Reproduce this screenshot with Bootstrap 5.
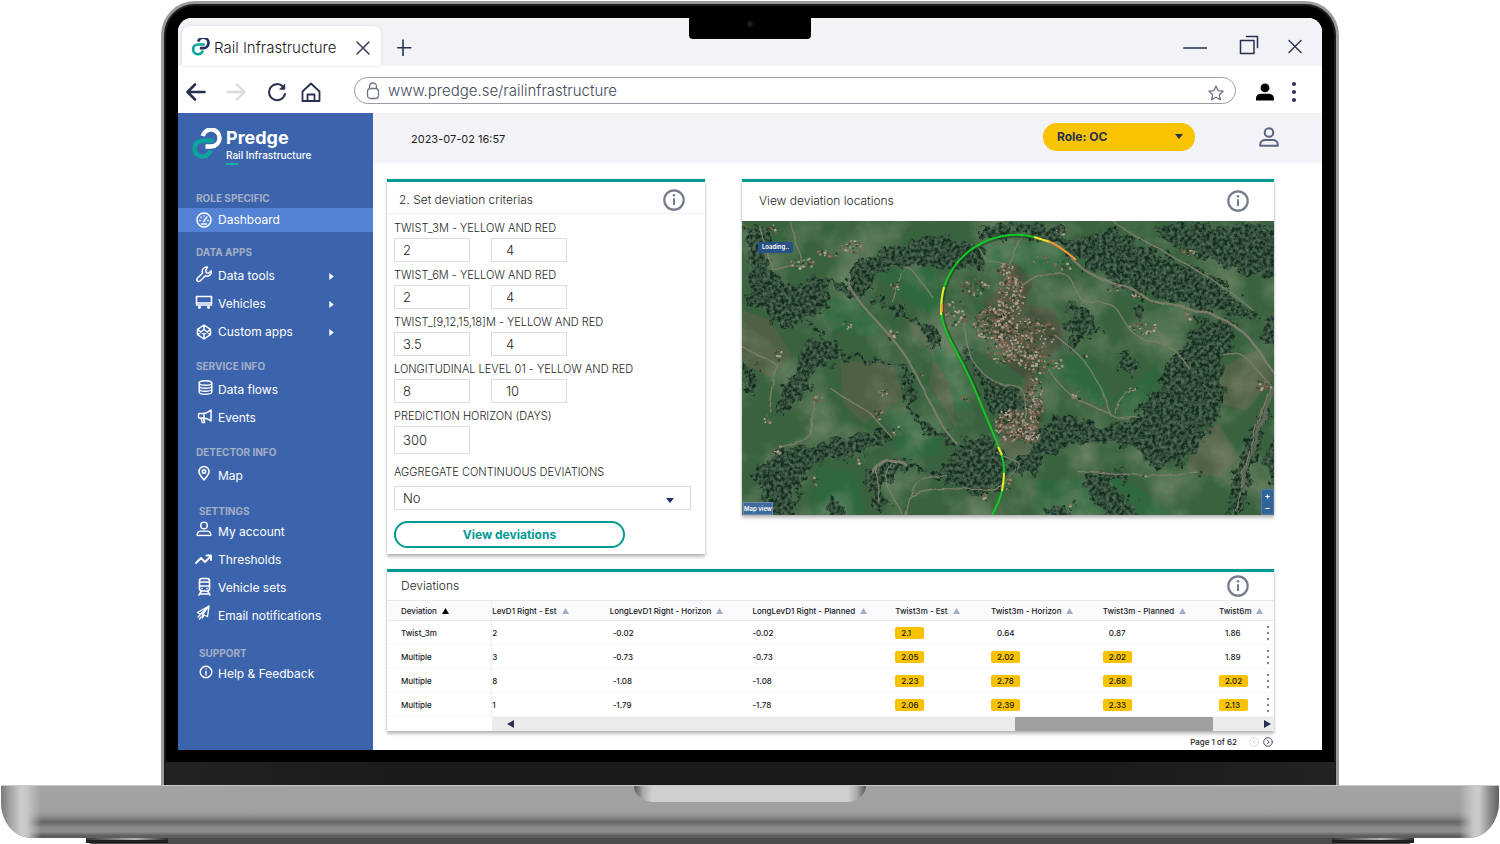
<!DOCTYPE html>
<html lang="en">
<head>
<meta charset="utf-8">
<meta name="viewport" content="width=device-width, initial-scale=1">
<title>Predge Rail Infrastructure</title>
<link href="https://cdn.jsdelivr.net/npm/bootstrap@5.3.0/dist/css/bootstrap.min.css" rel="stylesheet">
<style>
:root{--navy:#27304f;--teal:#009a93;--blue:#3c64ad;--amber:#fac300;--pale:#f2f2f7;--slate:#6f788c}
body{font-family:Inter,"Open Sans",sans-serif;font-size:12px;line-height:20px;color:#1d1f24;background:#fff;overflow-x:hidden}
svg{display:block;flex:none}
.ln{fill:none;stroke:currentColor;stroke-linecap:round;stroke-linejoin:round}
button.plain{border:0;background:none;padding:0;color:inherit}
/* laptop */
.stage{padding:1px 161px 0}
.lid{background:#000;border:3px solid #9a9c9c;border-bottom:0;border-radius:34px 34px 0 0;padding:14px 14px 0;box-shadow:inset 0 0 0 2px #1b1c1c}
.screen{background:#fff;border-radius:14px 14px 0 0;overflow:hidden;position:relative}
.notch{position:absolute;top:0;left:50%;margin-left:-61px;width:122px;height:21px;background:#000;border-radius:0 0 4px 4px}
.notch::after{content:"";position:absolute;left:58px;top:3px;width:6px;height:6px;border-radius:50%;background:#15222f;border:1px solid #1b1b1b}
.chin{height:23px;margin:12px -12px 0;background:linear-gradient(90deg,#212423,#1b1b1b 20%,#1b1b1b 80%,#212423)}
.deck{height:53px;margin:0 1px;border-radius:0 0 30px 30px / 0 0 36px 36px;border-top:1px solid #c9c9cb;position:relative;overflow:hidden;
background:linear-gradient(90deg,#77787a 0,#a2a3a5 9px,#cacccd 20px,#c4c6c7 26px,rgba(150,151,153,0) 40px,rgba(150,151,153,0) calc(100% - 40px),#c4c6c7 calc(100% - 26px),#cacccd calc(100% - 20px),#8a8b8d calc(100% - 9px),#5f6062 100%),linear-gradient(180deg,#a3a3a6 0,#9f9fa2 26px,#8b8b8e 31px,#68686a 36px,#707073 38px,#8d8d90 42px,#8b8b8d 46px,#5a5a5b 50px,#666 53px)}
.deck::before{content:"";position:absolute;left:50%;top:0;margin-left:-116px;width:232px;height:16px;border-radius:0 0 20px 20px / 0 0 16px 16px;background:linear-gradient(90deg,#55565a 0,#a9aaac 9px,#cfcfd1 18px,#cfcfd1 calc(100% - 18px),#a9aaac calc(100% - 9px),#55565a 100%)}
.feet{height:6px;margin:0 86px;background:#4b4b4b;border-radius:0 0 8px 8px}
.feet i{display:block;width:82px;height:5px;background:linear-gradient(90deg,#333,#b5b6b8 60%,#2b2b2b);border-bottom:3px solid #222}
/* browser */
.tabs{height:48px;background:var(--pale);padding:8px 19px 0 4px;color:var(--navy)}
.tab{width:199px;height:40px;background:#fff;border-radius:7px 7px 0 0;box-shadow:0 0 3px #d5d5dc;padding:3px 11px 0 9px;font-size:15px;font-weight:300;color:#15171c}
.tools{height:47px;padding:4px 22px 2px 8px;color:var(--navy)}
.tools>button,.tools>svg{margin-top:3px}
.tools .rl{margin-left:21px}
.tools .hm{margin-left:14px}
.url{height:27px;margin-left:33px;border:1px solid #9a9ca4;border-radius:14px;padding:0 11px 0 11px;color:#6d7484}
.url input{border:0;outline:0;background:none;width:100%;font-size:15px;font-weight:300;color:#454b5a;padding:0}
/* sidebar */
.side{width:195px;background:var(--blue);color:#fff;flex:none}
.brand{padding:15px 0 0 13px;height:75px}
.brand b{font-size:18px;line-height:20px;display:block}
.brand span{font-size:10px;line-height:14px;font-weight:500;display:block}
.brand u{display:block;width:12px;height:2px;background:#11b0a5;margin-top:1px}
.grp{margin:0 0 10px}
.grp h2{font-size:10px;line-height:20px;font-weight:700;color:#a3afc4;margin:0 0 0 18px}
.grp.snug{margin-bottom:16px}
.grp.wide{margin-bottom:14px}
.snug h2{line-height:14px;margin-left:21px}
.grp a{display:flex;align-items:center;height:28px;padding-left:17px;gap:5px;color:#fff;text-decoration:none;font-size:12px}
.grp a.on{height:24px;background:#5482d5}
.grp a .arr{margin-left:auto;margin-right:39px}
/* page */
.top{height:50px;background:var(--pale);padding:0 43px 2px 38px}
.top time{font-size:11px;padding-top:3px}
.role{appearance:none;width:152px;height:28px;border:0;border-radius:14px;font-size:12px;font-weight:700;color:#27304f;padding:0 14px;margin-right:64px;background:var(--amber) url("data:image/svg+xml,%3Csvg xmlns='http://www.w3.org/2000/svg' width='8' height='6'%3E%3Cpath d='M0 0h8L4 5z' fill='%2327304f'/%3E%3C/svg%3E") no-repeat right 12px center}
.body-pad{padding:16px 48px 0 14px}
.panel{border-top:3px solid var(--teal);background:#fff;box-shadow:0 3px 3px rgba(0,0,0,.25),0 0 2px rgba(0,0,0,.15)}
.panel h1{font-size:12px;font-weight:300;margin:0;line-height:20px}
.crit{width:318px;flex:none}
.crit .hd{height:32px;padding:4px 20px 0 12px;border-bottom:1px solid #f0f0f3}
.crit form{padding:4px 14px 6px 7px}
.crit label,.crit legend{display:block;font-size:11px;line-height:20px;font-weight:300;margin:0;float:none}
.crit fieldset{margin-bottom:3px}
.pair{display:flex;gap:21px}
.box{border:1px solid #dcdce0;height:24px;width:76px;padding:0 8px;font-size:13px;font-weight:300;color:#1d1f24;background-color:#fff;display:block;border-radius:0}
.box.r{padding-left:14px}
.box.tall{height:28px}
select.box{appearance:none;width:100%;background:url("data:image/svg+xml,%3Csvg xmlns='http://www.w3.org/2000/svg' width='8' height='5'%3E%3Cpath d='M0 0h8L4 5z' fill='%2327306a'/%3E%3C/svg%3E") no-repeat right 16px top 11px}
.go{width:231px;height:27px;border:2px solid var(--teal);border-radius:14px;background:#fff;color:var(--teal);font-weight:700;font-size:12px;line-height:20px;padding:0;display:block;margin-top:11px}
.mapc{margin-left:37px}
.mapc .hd{height:39px;padding:0 25px 2px 17px}
.mapbox{position:relative;height:294px;background:#3c6341;overflow:hidden}
.mapbox svg.sat{width:100%;height:100%}
.tag{position:absolute;background:#285084;color:#fff;font-size:6px;line-height:12px;font-weight:600;text-align:center;padding:0;border:0;white-space:nowrap}
.tag.load{left:16px;top:21px;width:35px;height:11px;border-radius:2px;line-height:10px}
.tag.view{left:1px;bottom:0;width:30px;height:13px;background:#3d6b9d;box-shadow:inset 0 0 0 1px #6b8bac}
.zoomer{position:absolute;right:0;bottom:0;width:13px;background:#2f6496;border:1px solid #56799f}
.zoomer button{display:block;width:100%;height:12px;border:0;background:none;color:#fff;font-size:8px;line-height:12px;padding:0;font-weight:700}
.dev{margin-top:15px}
.dev .hd{height:28px;padding:0 25px 0 14px}
.dev table{table-layout:fixed;width:100%;font-size:8px;line-height:12px;border-collapse:collapse;color:#15171c}
.dev th{height:20px;padding:0;font-weight:500;white-space:nowrap;background:#fafafc;border-top:1px solid #e6e8f0;border-bottom:1px solid #e6e8f0}
.dev td{height:24px;padding:0;border-bottom:1px solid #f6f6f8;font-weight:500}
.dev th:first-child,.dev td:first-child{padding-left:14px}
.dev td:last-child{padding-left:2px}
.dev th svg{display:inline-block;margin-left:5px;vertical-align:0}
.dev th:nth-child(2),.dev td:nth-child(2){border-left:1px solid #f0f0f4}
.v{display:block;width:29px;height:12px;padding-left:6px;border-radius:2px}
.v.hot{background:var(--amber)}
td.n{padding-left:3px}
.bar{height:14px;margin-left:105px;background:#ebebeb;padding:0 3px 0 15px}
.thumb{width:198px;height:14px;background:#9f9f9f;margin:0 51px 0 auto;border-radius:1px}
.pager{height:19px;font-size:8px;font-weight:500;padding:3px 1px 0 0}
</style>
</head>
<body>
<svg width="0" height="0" class="position-absolute" aria-hidden="true">
<symbol id="info" viewBox="0 0 22 22"><circle cx="11" cy="11" r="9.7" fill="none" stroke="#737b8c" stroke-width="2.2"/><path d="M11 9.2v6.8" stroke="#737b8c" stroke-width="2"/><circle cx="11" cy="6.2" r="1.3" fill="#737b8c"/></symbol>
<symbol id="links" viewBox="0 0 31 31"><path d="M11.800 8A8.500 8.500 0 1 1 20.500 18.500H14.500" fill="none" stroke="var(--ring)" stroke-width="4.400"/><path d="M22.500 12.600H11.500a8 8 0 1 0 7.800 9.800" fill="none" stroke="#0aa69b" stroke-width="4.400"/></symbol>
<symbol id="up" viewBox="0 0 7 6"><path d="M3.500 0 7 6H0z" fill="currentColor"/></symbol>
<symbol id="arrow" viewBox="0 0 5 8"><path d="M0 0l5 4-5 4z" fill="currentColor"/></symbol>
<symbol id="dots" viewBox="0 0 4 16"><g fill="#7f8590"><circle cx="2" cy="2" r="1.200"/><circle cx="2" cy="8" r="1.200"/><circle cx="2" cy="14" r="1.200"/></g></symbol>
<symbol id="person" viewBox="0 0 20 20"><circle cx="10" cy="5.500" r="4.300"/><path d="M1.200 18.800v-1.300c0-2.800 2.400-4.500 5-4.500h7.600c2.600 0 5 1.700 5 4.500v1.300z"/></symbol>
</svg>

<div class="stage">
<div class="lid">
<div class="screen">
  <header>
    <div class="tabs d-flex align-items-start">
      <div class="tab d-flex align-items-center">
        <svg width="19" height="19" viewBox="0 2 31 31" style="--ring:#243263"><use href="#links" width="31" height="31"/></svg>
        <span class="ms-1 me-auto">Rail Infrastructure</span>
        <button class="plain" aria-label="Close tab"><svg width="14" height="14" viewBox="0 0 14 14" class="ln" stroke-width="1.400" style="color:#27304f"><path d="M1 1l12 12M13 1 1 13"/></svg></button>
      </div>
      <button class="plain ms-3 mt-2 pt-1 me-auto" aria-label="New tab"><svg width="17" height="18" viewBox="4 0 17 18" class="ln" stroke-width="1.600"><path d="M10 2v15.500M4.800 9.700h13"/></svg></button>
      <div class="d-flex align-items-center mt-2">
        <button class="plain me-4 pe-2" aria-label="Minimize"><svg width="24" height="22" viewBox="0 0 24 22" class="ln" stroke-width="1.500"><path d="M.7 14h23"/></svg></button>
        <button class="plain me-4 pe-1" aria-label="Restore"><svg width="20" height="22" viewBox="0 0 20 22" class="ln" stroke-width="1.500"><path d="M1.500 6.500h13.500v13h-13.500zM7.500 2.500h11v11"/></svg></button>
        <button class="plain" aria-label="Close"><svg width="16" height="22" viewBox="0 0 16 22" class="ln" stroke-width="1.400"><path d="M2 6.500l12 12M14 6.500l-12 12"/></svg></button>
      </div>
    </div>
    <div class="tools d-flex align-items-center">
      <button class="plain" aria-label="Back"><svg width="20" height="18" viewBox="0 0 20 18" class="ln" stroke-width="2.600"><path d="M18.500 9H2M9 1.500 1.500 9 9 16.500"/></svg></button>
      <button class="plain ms-3 ps-1" aria-label="Forward"><svg width="20" height="18" viewBox="0 0 20 18" class="ln" stroke-width="2.400" style="color:#dcdcde"><path d="M1.500 9h17M11 1.500 18.500 9 11 16.500"/></svg></button>
      <button class="plain rl" aria-label="Reload"><svg width="20" height="20" viewBox="0 0 20 20" class="ln" stroke-width="2"><path d="M16 4.700A8 8 0 1 0 17.900 12"/><path d="M17.800 2.500v4.800H13z" fill="currentColor" stroke-width=".8"/></svg></button>
      <button class="plain hm" aria-label="Home"><svg width="20" height="20" viewBox="0 0 20 20" class="ln" stroke-width="1.800"><path d="M1.500 9.500 10 1.500l8.500 8V19h-17zM6.500 19v-6.500h7V19"/></svg></button>
      <div class="url d-flex align-items-center flex-grow-1 me-3">
        <svg width="14" height="18" viewBox="0 0 14 18" class="ln" stroke-width="1.300"><rect x="1.500" y="6.500" width="11" height="10" rx="3"/><path d="M3.500 6.500V4.500a3.500 3.500 0 0 1 7 0v2"/></svg>
        <input class="ms-2" type="text" aria-label="Address" value="www.predge.se/railinfrastructure">
        <button class="plain pt-1" aria-label="Bookmark"><svg width="16" height="16" viewBox="0 0 16 16" class="ln" stroke-width="1.300"><path d="M8 1l2.100 4.700 5 .5-3.800 3.500 1.100 5L8 12.200l-4.400 2.500 1.100-5L1 6.200l4.900-.5z"/></svg></button>
      </div>
      <svg width="18" height="20" viewBox="0 0 20 20" class="ms-1" fill="#000"><circle cx="10" cy="5.500" r="4.900"/><path d="M0 19.500V17c0-3.500 3-5 5.500-5h9c2.500 0 5.500 1.500 5.500 5v2.500z"/></svg>
      <button class="plain ms-3" aria-label="Menu"><svg width="10" height="20" viewBox="0 0 10 20" fill="#27304f"><circle cx="4" cy="2" r="2"/><circle cx="4" cy="10" r="2"/><circle cx="4" cy="18" r="2"/></svg></button>
    </div>
  </header>
  <div class="notch"></div>

  <div class="d-flex">
    <nav class="side">
      <div class="brand d-flex"><svg width="31" height="31" class="me-1" style="--ring:#fff"><use href="#links"/></svg><div><b>Predge</b><span>Rail Infrastructure</span><u></u></div></div>
      <div class="grp"><h2>ROLE SPECIFIC</h2>
        <a href="#" class="on"><svg width="18" height="18" viewBox="0 0 18 18" class="ln" stroke-width="1.500"><circle cx="9" cy="9" r="7"/><path d="M8.500 10.500 12 6M4.800 9.500h.4M9 4.700V5M6 6.200l.2.200M12.800 9.500h.4M6.500 13h5"/></svg>Dashboard</a></div>
      <div class="grp"><h2>DATA APPS</h2>
        <a href="#"><svg width="18" height="22" viewBox="0 0 18 22" class="ln" stroke-width="1.500"><path d="M12.500 2.200A4.300 4.300 0 0 0 7.600 8L2.400 13.300a1.900 1.900 0 0 0 2.700 2.700l5.300-5.200a4.300 4.300 0 0 0 5.800-5l-2.600 2.500-2.300-.6-.6-2.300z"/></svg>Data tools<svg class="arr" width="5" height="7"><use href="#arrow"/></svg></a>
        <a href="#"><svg width="18" height="20" viewBox="0 0 18 20" class="ln" stroke-width="1.600"><path d="M1.500 2.500h15v8.500h-15zM1.500 9h15"/><path d="M4.500 13v.5M13.500 13v.5" stroke-width="2.800"/></svg>Vehicles<svg class="arr" width="5" height="7"><use href="#arrow"/></svg></a>
        <a href="#"><svg width="18" height="18" viewBox="0 0 18 18" class="ln" stroke-width="1.400"><path d="M9 2l6.500 4.300v5.400L9 16l-6.500-4.300V6.300zM9 2v4.500M9 11.500V16M2.500 6.300 9 11.500l6.500-5.200M2.500 11.700 9 6.500l6.500 5.200"/></svg>Custom apps<svg class="arr" width="5" height="7"><use href="#arrow"/></svg></a></div>
      <div class="grp"><h2>SERVICE INFO</h2>
        <a href="#"><svg width="18" height="22" viewBox="0 0 18 22" class="ln" stroke-width="1.400"><ellipse cx="10.500" cy="4" rx="6.300" ry="2.300"/><path d="M4.200 4v9c0 3 12.600 3 12.600 0V4M4.200 7c0 3 12.600 3 12.600 0M4.200 10c0 3 12.600 3 12.600 0"/></svg>Data flows</a>
        <a href="#"><svg width="18" height="20" viewBox="0 0 18 20" class="ln" stroke-width="1.500"><path d="M16 2v11c-3-2.500-5-3-8-3H4.500a1 1 0 0 1-1-1V6.500a1 1 0 0 1 1-1H8c3 0 5-1 8-3.500M9 5.500V10M6 10l1.300 4.500h2.200L8.500 10"/></svg>Events</a></div>
      <div class="grp wide"><h2>DETECTOR INFO</h2>
        <a href="#"><svg width="18" height="22" viewBox="0 0 18 22" class="ln" stroke-width="1.600"><path d="M9 15C6 11.500 4 9.500 4 6.500a5 5 0 0 1 10 0C14 9.500 12 11.500 9 15z"/><circle cx="9" cy="6.500" r="1.700"/></svg>Map</a></div>
      <div class="grp snug"><h2>SETTINGS</h2>
        <a href="#"><svg width="18" height="22" viewBox="0 0 20 24" class="ln" stroke-width="1.900"><use href="#person" width="20" height="17"/></svg>My account</a>
        <a href="#"><svg width="18" height="18" viewBox="0 0 18 18" class="ln" stroke-width="1.800"><path d="M1 12l5-5 4 4 6-6M11.500 4.500H16V9"/></svg>Thresholds</a>
        <a href="#"><svg width="18" height="22" viewBox="0 0 18 22" class="ln" stroke-width="1.600"><rect x="4.500" y="1.500" width="10" height="12.500" rx="2.500"/><path d="M4.500 5h10M4.500 9h10M6.500 14 4 18M12.500 14l2.500 4M5 17h9M7 11.500h.2M12 11.500h.2"/></svg>Vehicle sets</a>
        <a href="#"><svg width="18" height="24" viewBox="0 0 18 24" class="ln" stroke-width="1.300"><path d="M14 2 2.500 8.500l3 1.700L14 2l-1.500 10.500-4-1.500M14 2 7.500 10.500v3.500l1.500-3M3 13l2-2M4.500 15 6 13"/></svg>Email notifications</a></div>
      <div class="grp snug mb-0"><h2>SUPPORT</h2>
        <a href="#"><svg width="18" height="20" viewBox="0 0 18 20" class="ln" stroke-width="1.400"><circle cx="11" cy="8" r="5.800"/><path d="M11 7.500V11M11 5v.1"/></svg>Help &amp; Feedback</a></div>
    </nav>

    <main class="flex-grow-1" style="min-width:0">
      <div class="top d-flex align-items-center">
        <time class="me-auto">2023-07-02 16:57</time>
        <select class="role" aria-label="Role"><option>Role: OC</option></select>
        <button class="plain" aria-label="Account"><svg width="20" height="20" viewBox="0 0 20 20" class="ln" stroke-width="2" style="color:#5a6784"><use href="#person"/></svg></button>
      </div>
      <div class="body-pad">
        <div class="d-flex align-items-start">
          <section class="panel crit">
            <div class="hd d-flex align-items-center justify-content-between"><h1>2. Set deviation criterias</h1><svg width="22" height="22"><use href="#info"/></svg></div>
            <form onsubmit="return false">
              <fieldset><legend>TWIST_3M - YELLOW AND RED</legend><div class="pair"><input class="box" aria-label="Yellow" value="2"><input class="box r" aria-label="Red" value="4"></div></fieldset>
              <fieldset><legend>TWIST_6M - YELLOW AND RED</legend><div class="pair"><input class="box" aria-label="Yellow" value="2"><input class="box r" aria-label="Red" value="4"></div></fieldset>
              <fieldset><legend>TWIST_[9,12,15,18]M - YELLOW AND RED</legend><div class="pair"><input class="box" aria-label="Yellow" value="3.5"><input class="box r" aria-label="Red" value="4"></div></fieldset>
              <fieldset><legend>LONGITUDINAL LEVEL 01 - YELLOW AND RED</legend><div class="pair"><input class="box" aria-label="Yellow" value="8"><input class="box r" aria-label="Red" value="10"></div></fieldset>
              <label for="hz">PREDICTION HORIZON (DAYS)</label><input id="hz" class="box tall mb-2" value="300">
              <label for="ag" class="mb-1">AGGREGATE CONTINUOUS DEVIATIONS</label>
              <select id="ag" class="box"><option>No</option></select>
              <button class="go">View deviations</button>
            </form>
          </section>
          <section class="panel mapc flex-grow-1">
            <div class="hd d-flex align-items-center justify-content-between"><h1>View deviation locations</h1><svg width="22" height="22"><use href="#info"/></svg></div>
            <div class="mapbox">
              <svg class="sat" viewBox="0 0 532 294" preserveAspectRatio="xMidYMid slice" role="img" aria-label="Satellite map with railway line">
                <defs>
                  <filter id="wood" x="-5%" y="-5%" width="110%" height="110%">
                    <feTurbulence type="fractalNoise" baseFrequency=".09" numOctaves="3" seed="4" result="n"/>
                    <feDisplacementMap in="SourceGraphic" in2="n" scale="22" xChannelSelector="R" yChannelSelector="G" result="d"/>
                    <feTurbulence type="fractalNoise" baseFrequency=".28" numOctaves="3" seed="9"/>
                    <feColorMatrix values="0 0 0 0 .17  0 0 0 0 .29  0 0 0 0 .19  1.600 0 0 0 -.55" result="s"/>
                    <feComposite in="s" in2="d" operator="in" result="t"/>
                    <feMerge><feMergeNode in="d"/><feMergeNode in="t"/></feMerge>
                    <feComponentTransfer><feFuncR type="linear" slope=".68"/><feFuncG type="linear" slope=".72"/><feFuncB type="linear" slope=".68"/></feComponentTransfer>
                  </filter>
                  <filter id="grain" x="0" y="0" width="100%" height="100%"><feTurbulence type="fractalNoise" baseFrequency=".022" numOctaves="5" seed="12"/><feColorMatrix values="0 0 0 0 .36  0 0 0 0 .39  0 0 0 0 .27  2.200 0 0 0 -.9"/></filter>
                  <filter id="bend"><feTurbulence type="fractalNoise" baseFrequency=".05" numOctaves="2" seed="2"/><feDisplacementMap in="SourceGraphic" scale="7"/></filter>
                </defs>
                <rect width="532" height="294" fill="#39623f"/>
                <g transform="translate(-2 -50.500) scale(.3442 .3333)">
                  <g fill="#2f683f"><path d="M380 300l180-10 30 60-20 80-60-20-70-60zM200 400l130-30 100 110-60 20-90-20zM890 590l110-50 80 150-40 20zM1090 690l130-110-10 140-90 20zM430 720l140 40 20 90-120 20zM860 930l250-10 150 110H860zM230 890l110 20 20 120H200zM520 500l100 50 60 150-40 30zM700 230l220-20 30 70-100 30-120-20z"/></g>
                  <g fill="#4f6145"><path d="M290 570l150 10 40 100-120 80-60-60zM1310 800l80-40 60 100-60 60-90-20zM10 420l80 30 60 100-60 70-84-40zM440 400l130 120-20 120 80 140-20-140-70-110zM740 800l120 20-20 60-90-30zM1380 600l120-60 51 80-80 100-80-20z"/></g>
                  <path fill="#4c4d3c" d="M760 275l50 5 40 60-20 60 80 20 30 60-10 60-70 30-10 80 30 90-20 70-90 0-30-60 70-60 20-60-60-50-50-120-10-70 70-60z" opacity=".7"/>
                </g>
                <rect width="532" height="294" filter="url(#grain)" opacity=".45"/>
                <g filter="url(#wood)"><g transform="translate(3 -45.500) scale(.3442 .3333)" fill="#1f3a2a">
                  <path d="M290 300l60-50 80-30 90-30 120 5 60 40-20 30-90 20-80-15-80 5-50 20-20 70-30 10zM680 150h240l40 50 100-40 140 70 130 60 120 90 40 50-90-20-100-10-170-50-140-70-90-80-100-20-110 5zM1190 150h361v170l-80-20-80-30-90-40-70-30z"/>
                  <path d="M1310 430l110 0 0 70-30 70 0 80-20 90-50 60-40 60-100 20-30-60-100-20-80 0-90 50-60 50-70-20 90-60 20-90 80-10 110 30 90-20 20-60 40-40 30-70 50-50z"/>
                  <path d="M640 790l60-20 50 60 10 60-20 50-60 20-80-40-70-20 40-30 50-10zM980 900l130-20-40 50 70 60v50h-90l-50-80zM1390 1040l40-180 70-160 25-10-30 100-30 110-20 140zM180 490l70 10 50 50-80 20-30 60-50 80-55 10 25-80 30-60zM0 900l100-70 200-40 110-40 30 40-90 40-90 20-70 30-40 80-20 80H50l0-110z"/>
                  <path d="M350 900l70-50 70 0-60 40-30 30 10 80-40 0zM690 590l100 50 20 50-40 35-60-30zM940 370l50 20 15 40-20 60-35 30-15-50zM1085 530l60 20-10 60-50-30zM0 150l70 20-10 90 40 40 60 30 80-10 10 60-50 40-90 50-40-60-60-30zM520 450l40 10 0 60-30-10zM0 560l40 30-10 60H0zM870 990l60 0 10 45h-60zM250 960l40 20-10 60h-40zM620 230l70-5 0 50-70 0zM1480 480l71-80v130zM1500 860l51-90v180z"/>
                </g>
                <g transform="translate(3 -45.500) scale(.3442 .3333)" fill="none" stroke="#1f3a2a" stroke-width="15"><path d="M160 430C250 480 290 560 380 555S480 600 480 690 600 760 610 830 520 890 440 870M380 370C420 400 500 420 560 500M640 520C680 600 700 700 760 740M150 330C250 300 290 330 330 370M1160 340l-20 100M960 390l60 80"/></g></g>
                <g filter="url(#bend)"><g transform="translate(-2 -50.500) scale(.3442 .3333)" fill="none" stroke="#7b7d69" stroke-width="4" stroke-linecap="round">
                  <path d="M310 340C340 400 450 500 490 570S560 740 630 820" stroke-width="6"/><path d="M970 270C1050 350 1130 340 1170 375S1300 400 1390 440 1500 530 1551 610" stroke-width="7"/><path d="M820 345C900 280 950 300 970 340S980 400 1040 395 1100 440 1140 485 1250 490 1300 590M480 1033C500 900 520 930 600 915M490 975C620 920 700 1000 780 930S780 880 740 840M440 390C490 240 490 290 560 380M920 500C1010 560 1040 620 1080 740M900 600C960 700 1020 700 1100 745l60-5M1090 730c0-40 30-60 60-80M150 160l30 120M60 170l30 120 90 0M820 190l-40 90-60-5-30-50M1080 150C1200 240 1350 290 1490 420M1440 1020C1460 900 1500 780 1540 650M6 530l100 50-20 140M650 440c0 90 20 140 70 180s80 10 100 40 0 100 5 130M980 900l190 15 160-10M440 880c-40 80 10 80 30 150M400 900v90M1400 550c80-20 90 50 140 90M210 680v120l-90 30M270 660l110 70 60 70"/>
                  <path d="M390 910c20-60 60-40 90-30" stroke-width="9"/><path d="M1460 960C1470 880 1510 800 1545 650" stroke-width="9" stroke="#5f6955"/>
                </g></g>
                <g id="roofs"></g>
                <g fill="none" stroke-width="2"><path d="M292 17C252 7 204 33 200 83c-1 30 16 41 37 93" stroke="#183520" stroke-width="4" opacity=".5"/>
                <path d="M292 16C252 6 203 32 199 83c-1 30 16 41 37 93s26 56 26 74c0 18-4 30-12 44" stroke="#13ca23"/>
                <path d="M292 16l16 5M202 66c-3 10-3 19-3 28M256 226l4 8M262 252c0 6-1 12-2 18" stroke="#f4e42a"/><path d="M306 20c10 4 20 12 28 19M200 83v8" stroke="#ee9537"/></g>
              </svg>
              <span class="tag load">Loading..</span><button class="tag view">Map view</button>
              <div class="zoomer"><button>+</button><button>−</button></div>
            </div>
          </section>
        </div>

        <section class="panel dev">
          <div class="hd d-flex align-items-center justify-content-between"><h1>Deviations</h1><svg width="22" height="22"><use href="#info"/></svg></div>
          <table>
            <colgroup><col style="width:11.800%"><col style="width:13.300%"><col style="width:16.100%"><col style="width:16.100%"><col style="width:10.800%"><col style="width:12.600%"><col style="width:13.100%"><col style="width:5.100%"><col></colgroup>
            <thead><tr id="heads"></tr></thead>
            <tbody id="rows"></tbody>
          </table>
          <div class="bar d-flex align-items-center"><svg width="7" height="8" viewBox="0 0 7 8" fill="#27304f"><path d="M7 0v8L0 4z"/></svg><div class="thumb"></div><svg width="7" height="8" viewBox="0 0 7 8" fill="#27304f"><path d="M0 0v8l7-4z"/></svg></div>
        </section>
        <div class="pager d-flex align-items-center justify-content-end"><span>Page 1 of 62</span>
          <button class="plain ms-2 ps-1" aria-label="Previous page"><svg width="10" height="10" viewBox="0 0 10 10" class="ln" style="color:#d9dade"><circle cx="5" cy="5" r="4.300"/><path d="M5.800 3 4 5l1.800 2"/></svg></button>
          <button class="plain ms-1" aria-label="Next page"><svg width="10" height="10" viewBox="0 0 10 10" class="ln" style="color:#4d5568"><circle cx="5" cy="5" r="4.300"/><path d="M4.300 3 6 5 4.300 7"/></svg></button></div>
      </div>
    </main>
  </div>
</div>
<div class="chin"></div>
</div>
</div>
<div class="deck"></div>
<div class="feet d-flex justify-content-between"><i></i><i></i></div>

<script src="https://cdn.jsdelivr.net/npm/bootstrap@5.3.0/dist/js/bootstrap.bundle.min.js"></script>
<script>
const heads=['Deviation','LevD1 Right - Est','LongLevD1 Right - Horizon','LongLevD1 Right - Planned','Twist3m - Est','Twist3m - Horizon','Twist3m - Planned','Twist6m'];
document.getElementById('heads').innerHTML=heads.map((h,i)=>`<th${i==7?' colspan="2"':''}>${h}<svg width="7" height="6" style="color:${i?'#a3afc8':'#000'}"><use href="#up"/></svg></th>`).join('');
const rows=[['Twist_3m','2','-0.02','-0.02',2.1,0.64,0.87,1.86],['Multiple','3','-0.73','-0.73',2.05,2.02,2.02,1.89],['Multiple','8','-1.08','-1.08',2.23,2.78,2.68,2.02],['Multiple','1','-1.79','-1.78',2.06,2.39,2.33,2.13]];
document.getElementById('rows').innerHTML=rows.map(r=>'<tr>'+r.map((c,i)=>i<4?`<td${i==2?' class="n"':''}>${c}</td>`:`<td><span class="v${c>=2?' hot':''}">${c}</span></td>`).join('')+'<td><svg width="4" height="16"><use href="#dots"/></svg></td></tr>').join('');

// Village roofs: clusters of [cx, cy, rx, ry, count] scattered with a fixed seed
let s=7;const rnd=()=>(s=(s*16807)%2147483647)/2147483647;
const cols=['#a08e7c','#8c7260','#b3a292','#75604f','#8f6247','#b0a496','#66574a','#2f3d2c','#36452f'];
const spots=[[268,75,14,22,170],[250,103,20,17,240],[282,115,30,20,260],[212,92,12,14,45],[232,65,14,9,45],[264,48,9,7,26],[298,142,22,9,90],[262,128,18,14,80],[292,178,9,24,130],[268,203,16,16,170],[286,212,11,10,90],[318,45,12,5,12],[300,38,10,5,8],[60,42,14,5,28],[85,32,12,4,20],[108,25,14,6,30],[36,133,5,5,12],[148,113,6,5,12],[152,65,5,5,12],[104,103,5,5,10],[142,170,5,5,9],[135,192,6,6,12],[75,178,5,4,9],[400,107,14,6,30],[396,73,6,5,12],[370,66,8,4,9],[445,31,7,5,14],[446,95,5,4,8],[520,163,10,5,18],[333,175,5,5,9],[390,168,4,3,5],[222,178,4,3,6],[35,228,6,4,9],[72,258,3,5,6],[25,199,4,5,7],[457,252,3,2,4],[402,254,3,2,4],[266,262,5,6,9],[330,282,5,4,7],[244,276,4,5,7],[178,152,2,2,4],[116,239,4,3,6],[32,7,4,5,7],[154,210,4,4,6],[317,10,5,4,9],[342,134,2,2,3]];
let g='';
for(const [x,y,a,b,n] of spots)for(let i=0;i<n;i++){const t=rnd()*6.283,r=Math.sqrt(rnd()),px=(x+a*r*Math.cos(t)).toFixed(1),py=(y+b*r*Math.sin(t)).toFixed(1);
g+=`<rect x="${px}" y="${py}" width="${(1.2+rnd()*1.9).toFixed(1)}" height="${(1+rnd()*1.6).toFixed(1)}" transform="rotate(${(rnd()*80-40)|0} ${px} ${py})" fill="${cols[(rnd()*cols.length)|0]}"/>`}
document.getElementById('roofs').innerHTML=g;
</script>
</body>
</html>
